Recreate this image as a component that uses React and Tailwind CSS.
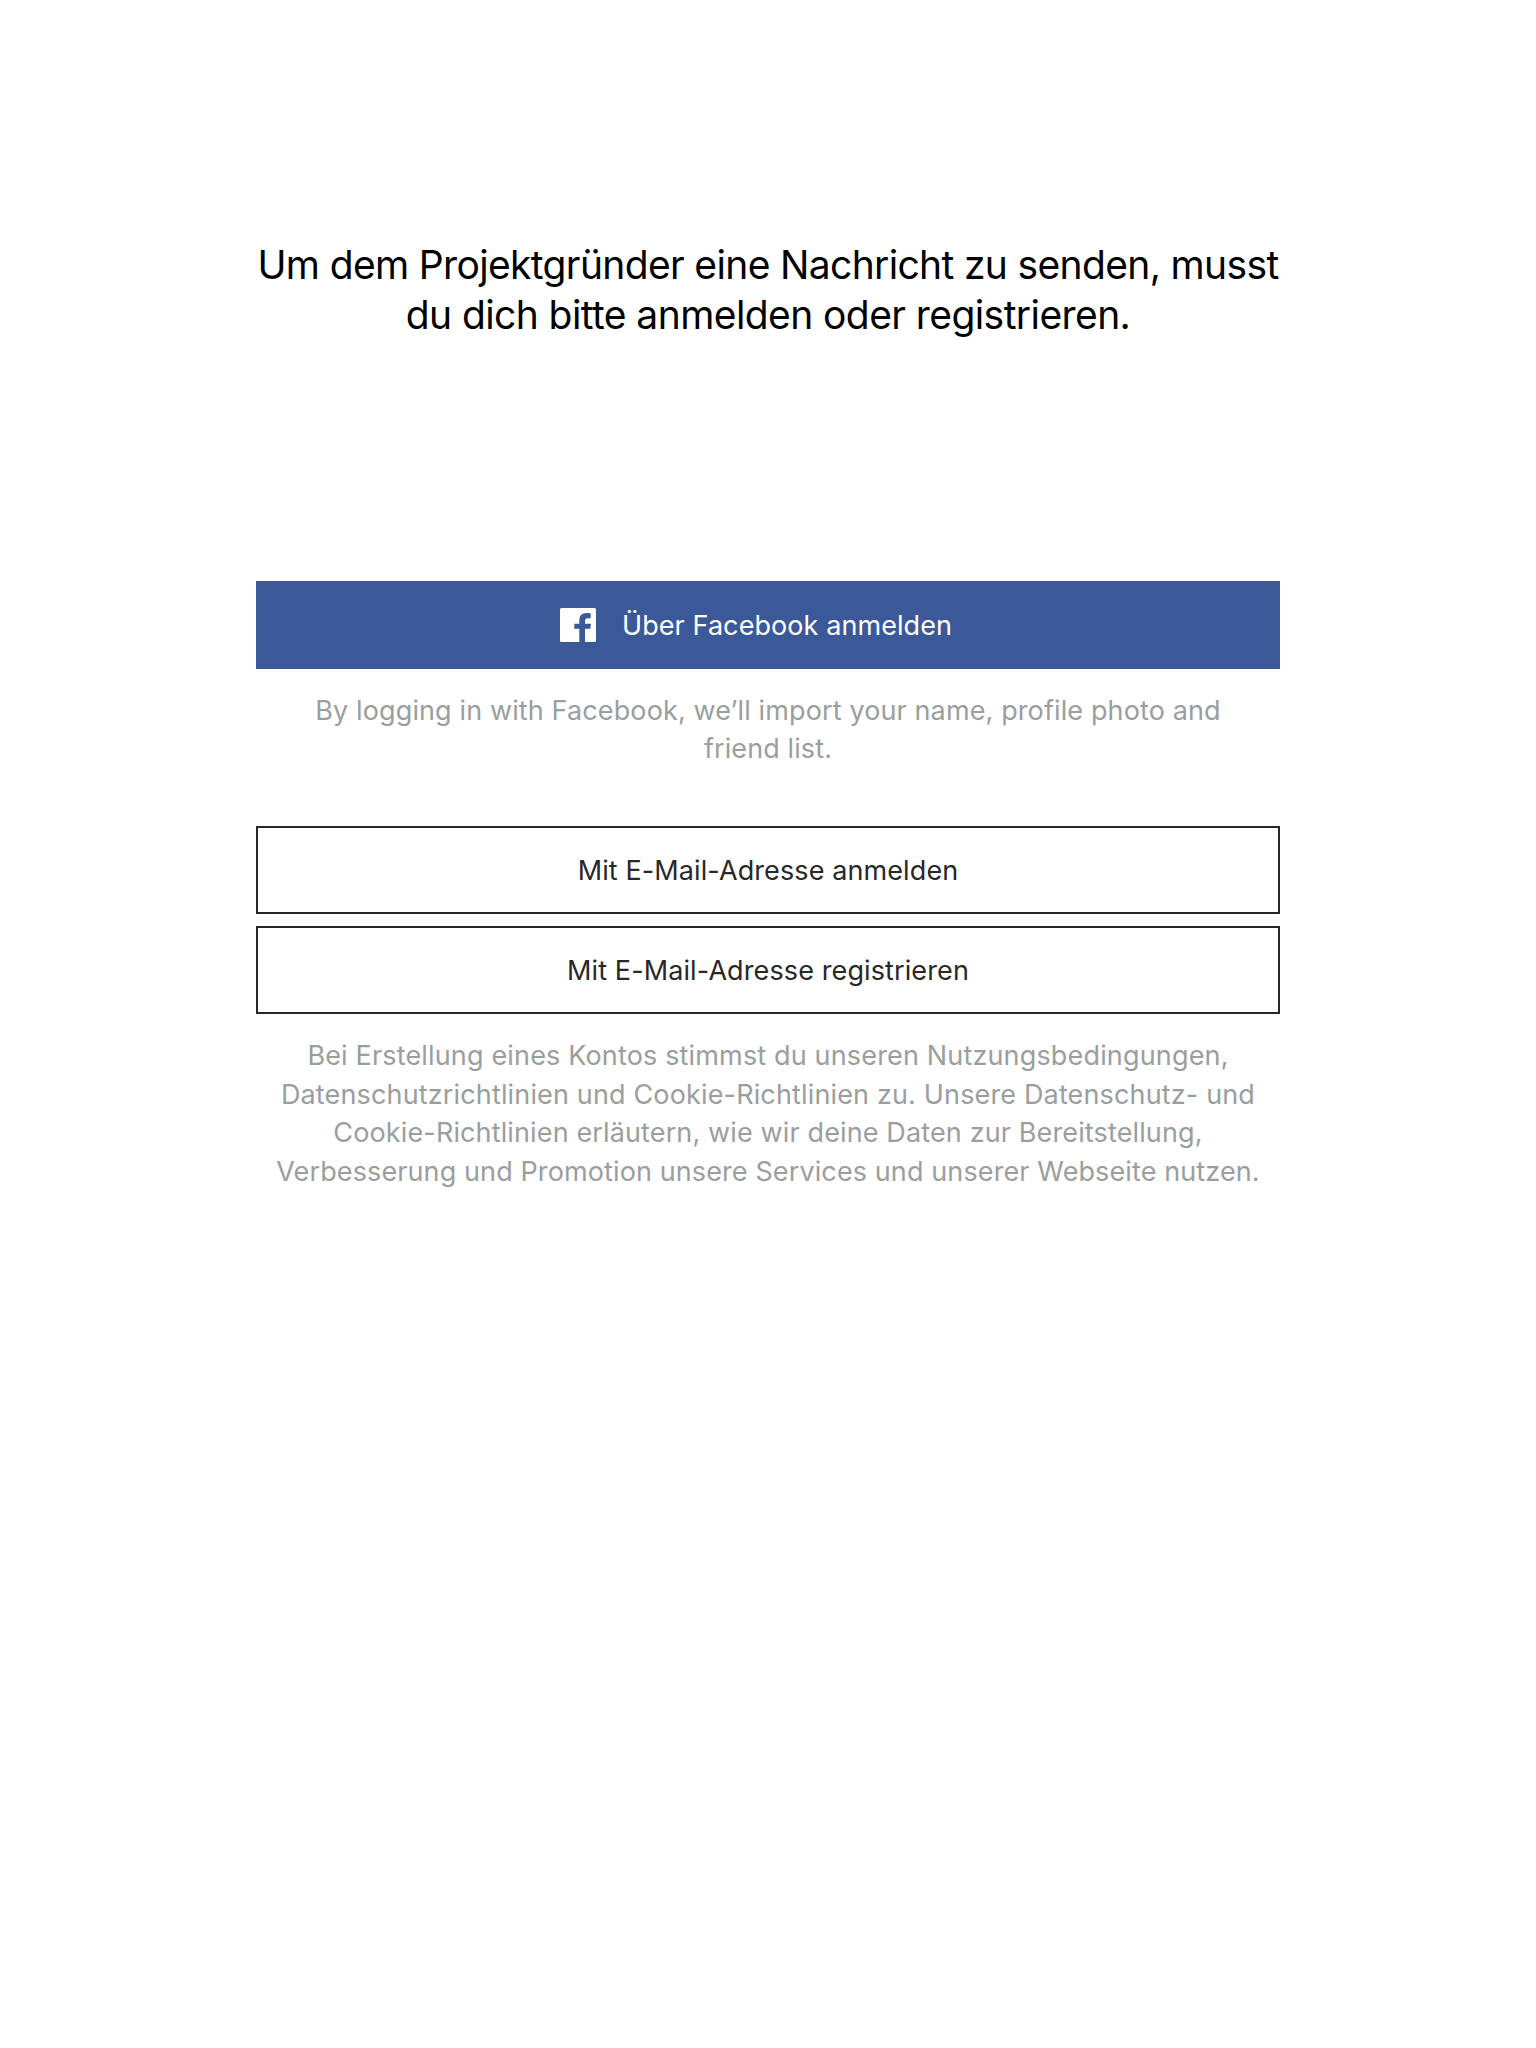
function Line({ className, children }) {
  return <span className={`block whitespace-nowrap ${className}`}>{children}</span>;
}

function FacebookIcon() {
  return (
    <svg className="h-[34px] w-[36px]" viewBox="0 0 36 34" fill="currentColor">
      <path d="M1.500 0H34.500Q36 0 36 1.500V32.500Q36 34 34.500 34H25V20.700H30.200L31 15.700H25V13.200Q25 10.300 27.700 10.300H30.700V5.200Q29 5 26.700 5Q19.300 5 19.300 12.200V15.700H14.300V20.700H19.300V34H1.500Q0 34 0 32.500V1.500Q0 0 1.500 0Z" />
    </svg>
  );
}

export default function App() {
  return (
    <main className="flex h-[2048px] w-[1536px] flex-col items-center bg-white pt-[240px] font-['Inter','Liberation_Sans',sans-serif] text-[27px]">
      <div className="flex w-[1024px] flex-col text-center">
        <h1 className="text-[39px] leading-[50px] text-black">
          <Line className="tracking-[-0.65px]">Um dem Projektgründer eine Nachricht zu senden, musst</Line>
          <Line className="tracking-[-0.58px]">du dich bitte anmelden oder registrieren.</Line>
        </h1>
        <button className="mt-[241px] flex h-[88px] items-center bg-[#3b5998] pl-[304px] text-white">
          <FacebookIcon />
          <span className="ml-[26px] whitespace-nowrap pt-[3px] tracking-[0.08px]">Über Facebook anmelden</span>
        </button>
        <p className="mt-[23px] leading-[38px] text-[#9b9e9e]">
          <Line className="tracking-[0.12px]">By logging in with Facebook, we’ll import your name, profile photo and</Line>
          <Line className="tracking-[0.1px]">friend list.</Line>
        </p>
        <button className="mt-[58px] h-[88px] border-2 border-[#282828] pt-[2px] tracking-[0.1px] text-[#282828]">
          Mit E-Mail-Adresse anmelden
        </button>
        <button className="mt-[12px] h-[88px] border-2 border-[#282828] pt-[2px] tracking-[0.11px] text-[#282828]">
          Mit E-Mail-Adresse registrieren
        </button>
        <p className="mt-[23px] leading-[38.670px] text-[#9b9e9e]">
          <Line className="tracking-[0.16px]">Bei Erstellung eines Kontos stimmst du unseren Nutzungsbedingungen,</Line>
          <Line className="tracking-[0.15px]">Datenschutzrichtlinien und Cookie-Richtlinien zu. Unsere Datenschutz- und</Line>
          <Line className="tracking-[0.13px]">Cookie-Richtlinien erläutern, wie wir deine Daten zur Bereitstellung,</Line>
          <Line className="tracking-[0.11px]">Verbesserung und Promotion unsere Services und unserer Webseite nutzen.</Line>
        </p>
      </div>
    </main>
  );
}
